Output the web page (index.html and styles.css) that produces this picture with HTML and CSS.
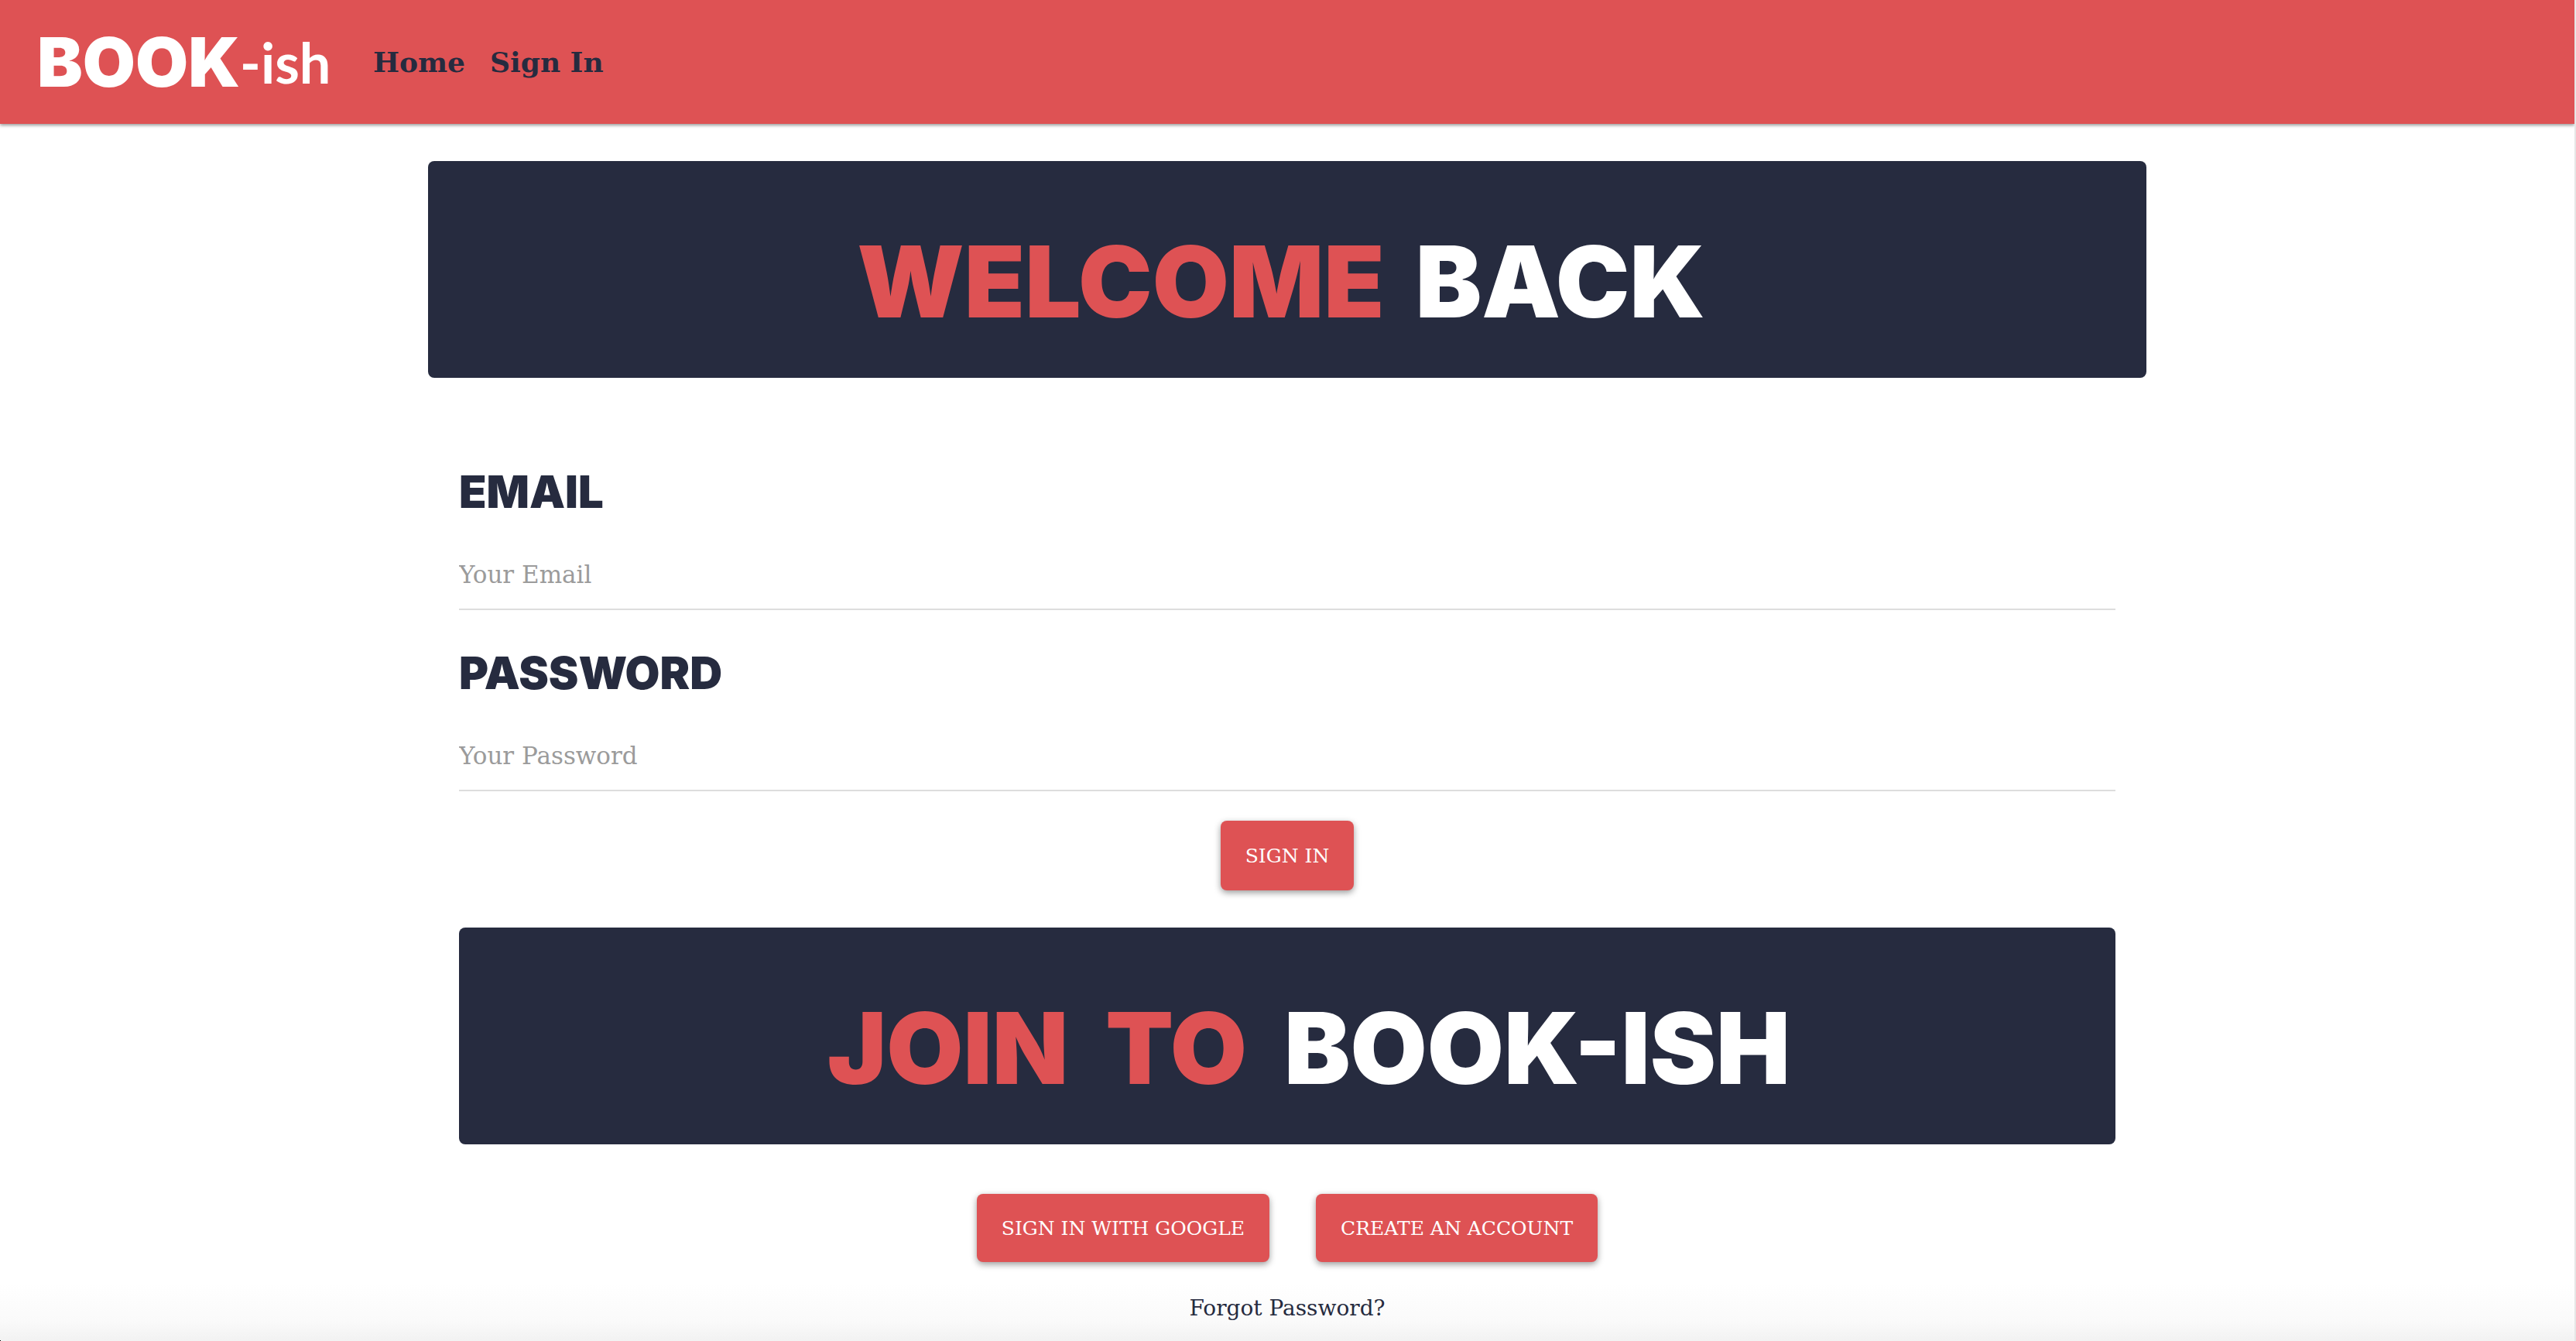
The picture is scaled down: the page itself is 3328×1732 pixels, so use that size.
FILE: index.html
```html
<!DOCTYPE html>
<html lang="en">
<head>
<meta charset="utf-8">
<meta name="viewport" content="width=device-width, initial-scale=1">
<title>Book-ish</title>
<link rel="stylesheet" href="styles.css">
</head>
<body>
<header class="topbar">
  <a class="logo" href="#"><span class="logo-book">BOOK</span><span class="logo-ish">-ish</span></a>
  <nav class="nav">
    <a href="#">Home</a>
    <a href="#">Sign In</a>
  </nav>
</header>
<main class="page">
  <h1 class="banner banner-welcome"><span class="accent">WELCOME</span> <span>BACK</span></h1>
  <div class="content">
    <form class="form">
      <div class="field">
        <label for="email">EMAIL</label>
        <input id="email" type="email" placeholder="Your Email">
      </div>
      <div class="field">
        <label for="password">PASSWORD</label>
        <input id="password" type="password" placeholder="Your Password">
      </div>
      <button class="btn" type="submit">SIGN IN</button>
    </form>
    <h2 class="banner banner-join"><span class="accent">JOIN</span> <span class="accent">TO</span> <span>BOOK-ISH</span></h2>
    <div class="actions">
      <button class="btn" type="button">SIGN IN WITH GOOGLE</button>
      <button class="btn" type="button">CREATE AN ACCOUNT</button>
    </div>
    <a class="forgot" href="#">Forgot Password?</a>
  </div>
</main>
</body>
</html>
```
FILE: styles.css
```css
:root {
  --red: #de5254;
  --navy: #262b3f;
  --slab: "DejaVu Serif", serif;
  --display: Inter, sans-serif;
}

* { box-sizing: border-box; }

body {
  margin: 0;
  min-height: 100vh;
  border-right: 2px solid #e6e6e6;
  background:
    linear-gradient(to top right, #000 50%, transparent 50%) no-repeat left bottom / 4px 8px,
    linear-gradient(to top, #f0f0f0, #fafafa 32px, #fff 80px) no-repeat bottom / 100% 80px,
    #fff;
  color: var(--navy);
  font-family: var(--slab);
}

a { color: inherit; text-decoration: none; }

.topbar {
  display: flex;
  align-items: center;
  gap: 64px;
  height: 160px;
  padding: 0 48px;
  background: var(--red);
  box-shadow: 0 2px 4px rgba(0, 0, 0, .4);
}

.logo {
  display: flex;
  align-items: center;
  width: 370px;
  color: #fff;
  white-space: nowrap;
}
.logo-book { font: 900 88px/88px var(--display); }
.logo-ish { font: 700 72px/72px Lato, sans-serif; }

.nav {
  display: flex;
  gap: 32px;
  font-size: 36px;
  font-weight: 700;
  line-height: 48px;
}

.page {
  width: 66.75%;
  margin: 0 auto;
  padding-top: 48px;
}

.banner {
  display: flex;
  justify-content: center;
  margin: 0;
  padding-top: 76px;
  padding-bottom: 44px;
  border-radius: 8px;
  background: var(--navy);
  color: #fff;
  font: 900 128px/160px var(--display);
  white-space: nowrap;
}
.banner-welcome { gap: 40px; padding-right: 16px; }
.banner-join { gap: 48px; padding-left: 56px; }
.accent { color: var(--red); }

.content { padding: 0 40px; }

.form {
  display: flex;
  flex-direction: column;
  align-items: center;
  padding: 104px 0 48px;
}

.field {
  display: flex;
  flex-direction: column;
  width: 100%;
  height: 234px;
}
.field label {
  padding-top: 8px;
  font: 900 58px/70px var(--display);
}
.field input {
  width: 100%;
  height: 90px;
  margin-top: 28px;
  padding: 0;
  border: 0;
  border-bottom: 2px solid #ddd;
  outline: 0;
  background: none;
  color: var(--navy);
  font: 31px var(--slab);
}
.field input::placeholder { color: #9b9b9b; opacity: 1; }

.btn {
  height: 90px;
  padding: 0 32px;
  border: 0;
  border-radius: 8px;
  background: var(--red);
  box-shadow: 0 3px 8px rgba(0, 0, 0, .4);
  color: #fff;
  font: 25px var(--slab);
  cursor: pointer;
}

.actions {
  display: flex;
  justify-content: center;
  gap: 60px;
  padding: 64px 0 32px;
}
.actions .btn { height: 88px; }

.forgot {
  display: block;
  padding-bottom: 20px;
  font-size: 28px;
  line-height: 56px;
  text-align: center;
}
```
